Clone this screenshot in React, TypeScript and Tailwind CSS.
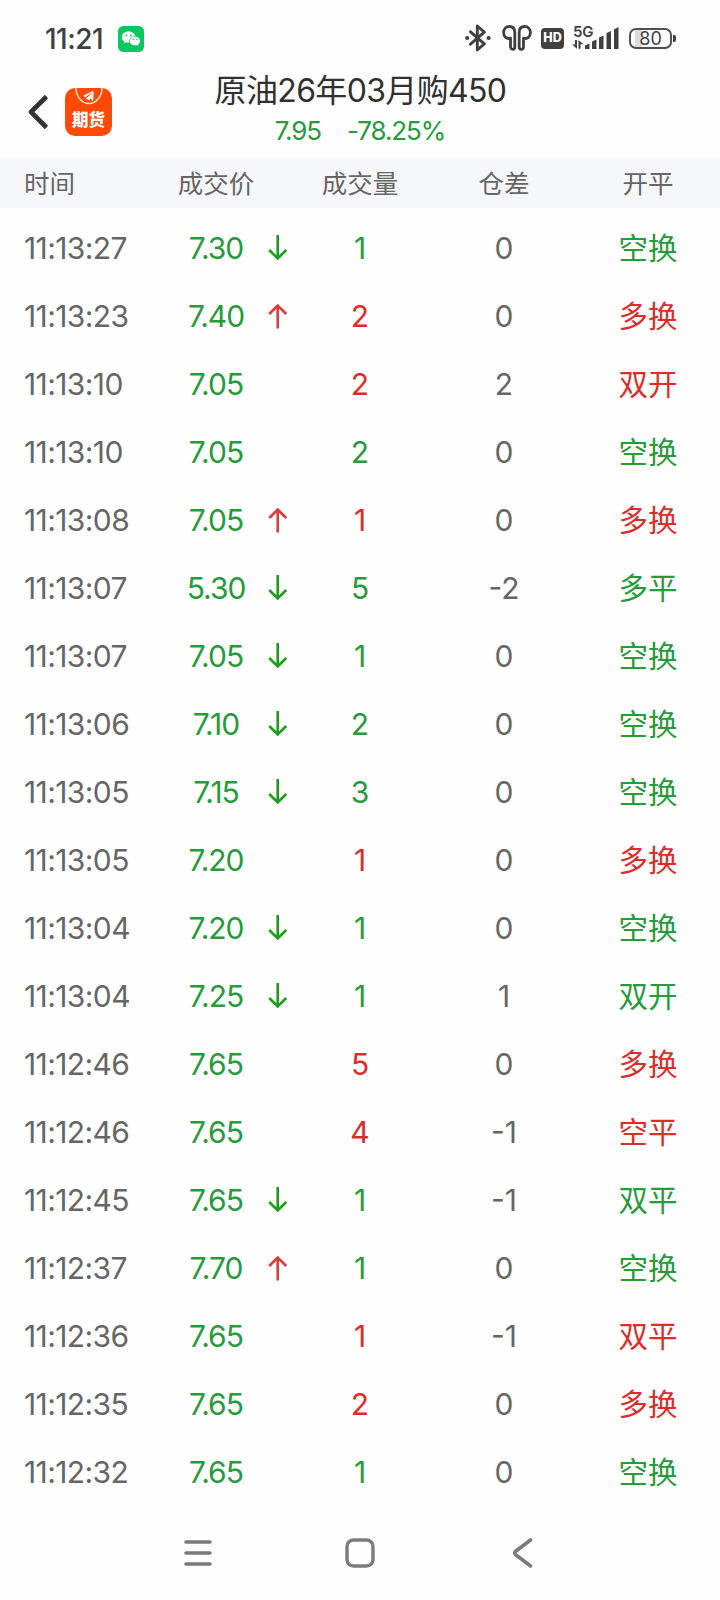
import clsx from "clsx";

type Tone = "up" | "down";

type Trade = {
  time: string;
  price: string;
  arrow?: Tone;
  volume: string;
  diff: string;
  kind: string;
  tone: Tone;
};

const trades: Trade[] = [
  { time: "11:13:27", price: "7.30", arrow: "down", volume: "1", diff: "0", kind: "空换", tone: "down" },
  { time: "11:13:23", price: "7.40", arrow: "up", volume: "2", diff: "0", kind: "多换", tone: "up" },
  { time: "11:13:10", price: "7.05", volume: "2", diff: "2", kind: "双开", tone: "up" },
  { time: "11:13:10", price: "7.05", volume: "2", diff: "0", kind: "空换", tone: "down" },
  { time: "11:13:08", price: "7.05", arrow: "up", volume: "1", diff: "0", kind: "多换", tone: "up" },
  { time: "11:13:07", price: "5.30", arrow: "down", volume: "5", diff: "-2", kind: "多平", tone: "down" },
  { time: "11:13:07", price: "7.05", arrow: "down", volume: "1", diff: "0", kind: "空换", tone: "down" },
  { time: "11:13:06", price: "7.10", arrow: "down", volume: "2", diff: "0", kind: "空换", tone: "down" },
  { time: "11:13:05", price: "7.15", arrow: "down", volume: "3", diff: "0", kind: "空换", tone: "down" },
  { time: "11:13:05", price: "7.20", volume: "1", diff: "0", kind: "多换", tone: "up" },
  { time: "11:13:04", price: "7.20", arrow: "down", volume: "1", diff: "0", kind: "空换", tone: "down" },
  { time: "11:13:04", price: "7.25", arrow: "down", volume: "1", diff: "1", kind: "双开", tone: "down" },
  { time: "11:12:46", price: "7.65", volume: "5", diff: "0", kind: "多换", tone: "up" },
  { time: "11:12:46", price: "7.65", volume: "4", diff: "-1", kind: "空平", tone: "up" },
  { time: "11:12:45", price: "7.65", arrow: "down", volume: "1", diff: "-1", kind: "双平", tone: "down" },
  { time: "11:12:37", price: "7.70", arrow: "up", volume: "1", diff: "0", kind: "空换", tone: "down" },
  { time: "11:12:36", price: "7.65", volume: "1", diff: "-1", kind: "双平", tone: "up" },
  { time: "11:12:35", price: "7.65", volume: "2", diff: "0", kind: "多换", tone: "up" },
  { time: "11:12:32", price: "7.65", volume: "1", diff: "0", kind: "空换", tone: "down" },
];

const toneClass: Record<Tone, string> = {
  up: "text-[#dc2c2c]",
  down: "text-[#259b3c]",
};

function WechatIcon() {
  return (
    <svg width="26" height="26" viewBox="0 0 26 26">
      <rect width="26" height="26" rx="5.5" fill="#07c861" />
      <path d="M10.6 5.6c-3.8 0-6.8 2.4-6.8 5.5 0 1.8 1 3.3 2.5 4.3l-.6 2 2.4-1.2c.8.2 1.6.4 2.5.4 3.8 0 6.8-2.5 6.8-5.5s-3-5.5-6.8-5.5z" fill="#fff" />
      <path d="M16.9 10.5c-3.1 0-5.5 2-5.5 4.6s2.4 4.6 5.5 4.6c.7 0 1.3-.1 1.9-.3l2 1-.5-1.7c1.3-.9 2.1-2.1 2.1-3.6 0-2.6-2.4-4.6-5.5-4.6z" fill="#fff" stroke="#07c861" strokeWidth="0.7" />
      <circle cx="8.3" cy="9.5" r="0.9" fill="#07c861" />
      <circle cx="12.8" cy="9.5" r="0.9" fill="#07c861" />
      <circle cx="15.1" cy="13.6" r="0.75" fill="#07c861" />
      <circle cx="18.9" cy="13.6" r="0.75" fill="#07c861" />
    </svg>
  );
}

function BluetoothIcon() {
  return (
    <svg width="26" height="28" viewBox="0 0 26 28" fill="none" stroke="#404040" strokeWidth="2.9">
      <path d="M5.5 7.8 19.3 19.8 12.3 26V2L19.3 8.2 5.5 20.2" strokeLinejoin="round" strokeLinecap="round" />
      <circle cx="2.2" cy="14" r="2.1" fill="#404040" stroke="none" />
      <circle cx="23.6" cy="14" r="2.1" fill="#404040" stroke="none" />
    </svg>
  );
}

function EarbudsIcon() {
  return (
    <svg width="30" height="26" viewBox="0 0 30 26" fill="none" stroke="#404040" strokeWidth="2.8" strokeLinejoin="round">
      <path d="M7.300 1.500c3.400 0 5.500 2.300 5.500 6v14.200c0 3.500-4.300 3.500-4.300 0v-8.500c-4 1.200-6.900-1.500-6.900-5.600 0-3.700 2.500-6.100 5.700-6.100z" />
      <path d="M22.700 1.500c-3.400 0-5.500 2.300-5.500 6v14.200c0 3.500 4.300 3.500 4.300 0v-8.500c4 1.200 6.900-1.500 6.900-5.600 0-3.700-2.500-6.100-5.700-6.100z" />
    </svg>
  );
}

function SignalIcon() {
  return (
    <div className="relative h-[28px] w-[48px]">
      <span className="absolute top-0 left-[1px] text-[15px] leading-[16px] font-semibold tracking-[-0.3px]">5G</span>
      <svg className="absolute top-[1px] left-0" width="48" height="26" viewBox="0 0 48 26" fill="#404040">
        <path d="M3 15v4.500H0l5 4.300V15zM6.500 23.800V15l5 4.300h-3v4.500z" />
        <path d="M13 20.5l4.500-2V24H13zM20 16.500l4.500-2V24H20zM27 12.500l4.500-2V24H27zM34.500 8l4.500-2v18h-4.500zM42 4.500l4.500-2.500v22H42z" />
      </svg>
    </div>
  );
}

function StatusBar() {
  return (
    <div className="flex h-[66px] items-start pr-[44px] pl-[45px] text-[#404040]">
      <span className="mt-[22px] w-[73px] text-[28px] leading-[34px] font-medium tracking-[-0.5px]">11:21</span>
      <span className="mt-[26px]">
        <WechatIcon />
      </span>
      <div className="mt-[24px] ml-auto flex h-7 items-center">
        <BluetoothIcon />
        <span className="ml-[11px]">
          <EarbudsIcon />
        </span>
        <span className="ml-[9px] flex h-[21px] w-[23px] items-center justify-center rounded-[4px] bg-[#404040] pt-px text-[12.5px] font-extrabold text-white">
          HD
        </span>
        <span className="ml-[8px]">
          <SignalIcon />
        </span>
        <span className="ml-[9px] flex h-[21px] w-[43px] items-center justify-center rounded-[7px] border-2 border-[#505050] bg-[linear-gradient(90deg,#fff_4px,#dcdcdc_4px,#dcdcdc_11px,#fff_11px)] text-[18px] leading-none">
          <span className="relative top-px">80</span>
        </span>
        <span className="ml-px h-[7px] w-[3px] rounded-r-[2px] bg-[#404040]" />
      </div>
    </div>
  );
}

function FuturesLogo() {
  return (
    <div className="relative flex h-[48px] w-[47px] items-end justify-center overflow-hidden rounded-[10px] bg-[#ff4a05] pb-[5px]">
      <svg className="absolute inset-0" width="48" height="48" viewBox="0 0 48 48" fill="none">
        <path d="M11 0a13 15.5 0 0 0 26 0" stroke="#ffd9c8" strokeWidth="1.5" />
        <path d="M19 7.500 28 3.200 20 9.300zM21.500 10.500 28.200 4 24.200 12zM25.500 10.500l2.700-6-.2 8z" fill="#fff" stroke="#fff" strokeWidth="0.6" />
      </svg>
      <span className="text-[16.5px] leading-[21px] font-black text-white">期货</span>
    </div>
  );
}

function Header() {
  return (
    <header className="grid h-[92px] grid-cols-[144px_1fr_144px]">
      <div className="flex items-start pt-[22px] pl-[28px]">
        <svg className="mt-[6px]" width="22" height="36" viewBox="0 0 22 36" fill="none" stroke="#333" strokeWidth="4.6">
          <path d="M18.5 2.500 3 18 18.500 33.500" strokeLinejoin="round" />
        </svg>
        <div className="ml-[15px]">
          <FuturesLogo />
        </div>
      </div>
      <div className="flex flex-col items-center">
        <h1 className="mt-[5px] pl-px text-[32px] leading-[40px] tracking-[-0.65px] whitespace-nowrap text-[#303030]">原油26年03月购450</h1>
        <p className="mt-[4px] flex gap-[26px] text-[26px] leading-[32px] tracking-[-1.1px] text-[#259b3c]">
          <span>7.95</span>
          <span>-78.25%</span>
        </p>
      </div>
    </header>
  );
}

function Arrow({ dir }: { dir: Tone }) {
  return (
    <svg
      className="absolute top-[21px] left-[124px]"
      width="20"
      height="26"
      viewBox="0 0 20 26"
      fill="none"
      stroke={dir === "up" ? "#dc3c3c" : "#1a9f1a"}
      strokeWidth="2.6"
    >
      {dir === "up" ? <path d="M9.700 25.500V2.500M1.200 11 9.700 2.500l8.500 8.500" /> : <path d="M9.700 0v23.500M1.200 15l8.500 8.500 8.500-8.500" />}
    </svg>
  );
}

function TradeRow({ trade }: { trade: Trade }) {
  return (
    <li className="grid h-[68px] grid-cols-5 items-center text-center text-[30px] text-[#666]">
      <span className="pl-[24px] text-left tracking-[-0.6px]">{trade.time}</span>
      <span className="relative flex h-full items-center justify-center tracking-[-1px] text-[#259b3c]">
        {trade.price}
        {trade.arrow && <Arrow dir={trade.arrow} />}
      </span>
      <span className={toneClass[trade.tone]}>{trade.volume}</span>
      <span>{trade.diff}</span>
      <span className={clsx("pt-px text-[29.5px]", toneClass[trade.tone])}>{trade.kind}</span>
    </li>
  );
}

function NavBar() {
  return (
    <nav className="flex h-[94px] items-center justify-between pr-[187px] pl-[184px]">
      <svg width="28" height="28" viewBox="0 0 28 28" stroke="#7b7b7b" strokeWidth="3.6" strokeLinecap="round">
        <path d="M2 3h24M2 14h24M2 25h24" />
      </svg>
      <svg className="mr-[6px]" width="30" height="30" viewBox="0 0 30 30" fill="none" stroke="#7b7b7b" strokeWidth="3.4">
        <rect x="2" y="2" width="26" height="26" rx="6.5" />
      </svg>
      <svg width="20" height="30" viewBox="0 0 20 30" fill="none" stroke="#7b7b7b" strokeWidth="3.6" strokeLinecap="round">
        <path d="M17.5 2 3 13q-2.5 2 0 4l14.500 11" />
      </svg>
    </nav>
  );
}

export default function App() {
  return (
    <main className="h-[1600px] w-[720px] overflow-hidden bg-[#fefefe] font-['Inter','Noto_Sans_CJK_SC',sans-serif]">
      <StatusBar />
      <Header />
      <div className="grid h-[50px] grid-cols-5 items-center bg-[#f6f7f9] pt-[2px] text-center text-[25.5px] text-[#666]">
        <span className="pl-[24px] text-left">时间</span>
        <span>成交价</span>
        <span>成交量</span>
        <span>仓差</span>
        <span>开平</span>
      </div>
      <ul className="pt-[6px]">
        {trades.map((trade, i) => (
          <TradeRow key={i} trade={trade} />
        ))}
      </ul>
      <NavBar />
    </main>
  );
}
